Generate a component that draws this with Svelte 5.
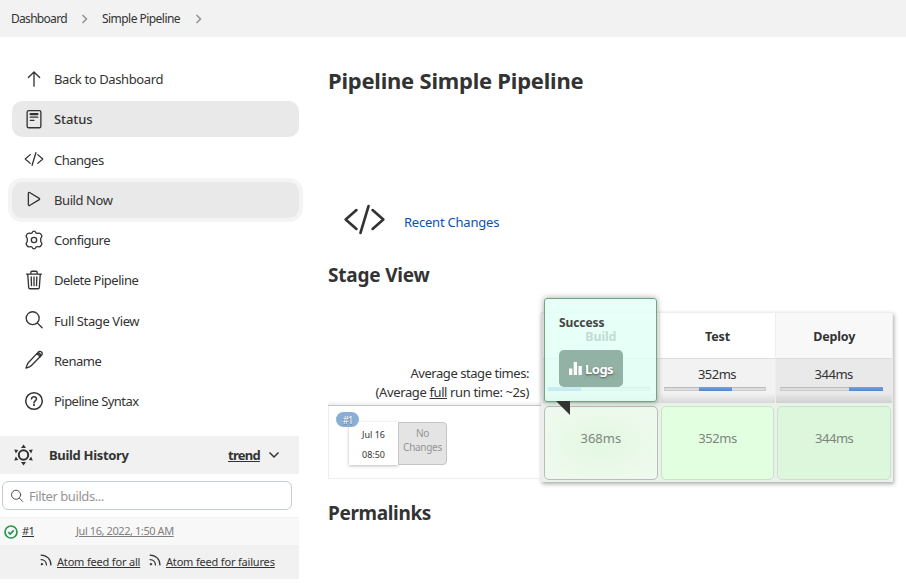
<script>
  const items = [
    { icon: 'up', label: 'Back to Dashboard', ls: -0.38 },
    { icon: 'doc', label: 'Status', active: true, ls: -0.1 },
    { icon: 'code', label: 'Changes', ls: -0.5 },
    { icon: 'play', label: 'Build Now', focus: true, ls: -0.42 },
    { icon: 'gear', label: 'Configure', ls: -0.48 },
    { icon: 'trash', label: 'Delete Pipeline', ls: -0.48 },
    { icon: 'search', label: 'Full Stage View', ls: -0.4 },
    { icon: 'pencil', label: 'Rename', ls: -0.5 },
    { icon: 'help', label: 'Pipeline Syntax', ls: -0.54 }
  ];
  const stages = [
    { name: 'Build', time: '368ms', start: 0 },
    { name: 'Test', time: '352ms', start: 34 },
    { name: 'Deploy', time: '344ms', start: 67.6 }
  ];
</script>

{#snippet icon(name)}
  <svg class="ic" viewBox="0 0 512 512" fill="none" stroke="currentColor" stroke-width="34" stroke-linecap="round" stroke-linejoin="round">
    {#if name === 'up'}
      <path d="M112 220 256 76l144 144M256 90v350" />
    {:else if name === 'doc'}
      <rect x="80" y="40" width="352" height="440" rx="40" />
      <path d="M160 120h192v20H160zM160 210h192M160 290h96" />
    {:else if name === 'code'}
      <path d="M160 368 32 256l128-112M352 368l128-112-128-112M304 96l-96 320" />
    {:else if name === 'play'}
      <path d="M112 111v290c0 17.400 17 28.500 31 20.200l247.900-148.400c12.100-7.200 12.100-26.400 0-33.600L143 90.800c-14-8.300-31 2.800-31 20.200z" />
    {:else if name === 'gear'}
      <circle cx="256" cy="256" r="68" />
      <path d="M256 28c34 0 42 24 51 48 18 7 32 18 65 6 42-8 70 26 84 64 8 32-8 46-26 66-3 24-3 62 0 88 18 20 34 34 26 66-14 38-42 72-84 64-33-12-47-1-65 6-9 24-17 48-51 48s-42-24-51-48c-18-7-32-18-65-6-42 8-70-26-84-64-8-32 8-46 26-66 3-26 3-64 0-88-18-20-34-34-26-66 14-38 42-72 84-64 33 12 47 1 65-6 9-24 17-48 51-48z" />
    {:else if name === 'trash'}
      <path d="m96 112 24 336c1 20 14 32 32 32h208c18 0 31-12 32-32l24-336M64 104h384M176 96V60c0-16 10-28 28-28h104c18 0 28 12 28 28v36M256 176v224M184 176l8 224M328 176l-8 224" />
    {:else if name === 'search'}
      <circle cx="222" cy="210" r="166" />
      <path d="m344 336 120 120" />
    {:else if name === 'pencil'}
      <path d="M358 62c28-34 66-34 90-10 24 26 24 60-6 88L184 402c-28 28-66 40-134 62 16-60 30-104 60-136zM318 104c44 2 84 42 88 84M350 72c44 4 78 36 84 78" />
    {:else if name === 'help'}
      <circle cx="256" cy="256" r="212" stroke-width="38" />
      <path d="M192 202c6-40 34-54 66-54 36 0 64 22 62 58-2 44-64 48-64 92v12" stroke-width="38" />
      <circle cx="256" cy="360" r="12" />
    {:else if name === 'feed'}
      <circle cx="104" cy="408" r="28" fill="currentColor" />
      <path d="M76 240c116 0 196 84 196 196M76 76c208 0 360 152 360 360" stroke-width="46" />
    {/if}
  </svg>
{/snippet}

{#snippet chevron()}
  <svg class="chev" viewBox="0 0 8 12" fill="none" stroke="#919191" stroke-width="1.500"><path d="m1.500 2 4 4-4 4" /></svg>
{/snippet}

<div class="page">
  <header>
    <span class="c1">Dashboard</span>{@render chevron()}<span class="c2">Simple Pipeline</span>{@render chevron()}
  </header>
  <div class="body">
    <aside>
      <nav>
        {#each items as it}
          <div class="item" class:active={it.active} class:focus={it.focus}>
            {@render icon(it.icon)}<span style="letter-spacing:{it.ls}px">{it.label}</span>
          </div>
        {/each}
      </nav>
      <section class="history">
        <div class="hhead">
          <svg class="sun" viewBox="0 0 20 22"><circle cx="10" cy="11" r="4.700" fill="none" stroke="#333" stroke-width="2" /><path fill="#333" d="m10 .5 2.500 3.500h-5zM10 21.500l2.500-3.500h-5zM.7 5.500l4 .4-2.300 3.500zM19.300 5.500l-4 .4 2.300 3.500zM.7 16.500l4-.4-2.300-3.500zM19.300 16.500l-4-.4 2.300-3.500z" /></svg>
          <b class="title">Build History</b>
          <b class="trend">trend</b>
          <svg class="down" viewBox="0 0 12 8" fill="none" stroke="#333" stroke-width="1.500"><path d="m1.500 1.500 4.500 4.500 4.500-4.500" /></svg>
        </div>
        <div class="filterwrap"><div class="filter">{@render icon('search')}<span>Filter builds...</span></div></div>
        <div class="build">
          <svg viewBox="0 0 14 14" fill="none" stroke="#23994b" stroke-width="1.700"><circle cx="7" cy="7" r="6" /><path d="m4.300 7.200 1.900 1.900 3.500-3.800" /></svg>
          <span class="num"><span>#1</span></span><span class="date">Jul 16, 2022, 1:50 AM</span>
        </div>
        <div class="feeds">
          {@render icon('feed')}<span class="f1">Atom feed for all</span>{@render icon('feed')}<span class="f2">Atom feed for failures</span>
        </div>
      </section>
    </aside>
    <main>
      <h1>Pipeline Simple Pipeline</h1>
      <div class="recent">{@render icon('code')}<span>Recent Changes</span></div>
      <h2>Stage View</h2>
      <div class="view">
        <div class="runs">
          <div class="avg"><div class="a1">Average stage times:</div><div class="a2">(Average <u>full</u> run time: ~2s)</div></div>
          <div class="run">
            <span class="badge">#1</span>
            <div class="when"><span>Jul 16</span><span>08:50</span></div>
            <div class="nochg">No<br />Changes</div>
          </div>
        </div>
        <div class="stages">
          {#each stages as s, i}
            <div class="stage s{i}">
              <div class="name">{s.name}</div>
              <div class="time"><span>{s.time}</span><div class="bar"><i style="margin-left:{s.start}%"></i></div></div>
              <div class="cellwrap"><div class="cell">{s.time}</div></div>
            </div>
          {/each}
        </div>
        <div class="tip">
          <b>Success</b>
          <div class="logs"><svg viewBox="0 0 13 13" fill="#fff"><path d="M0 6.500h3.300V13H0zM4.700 0H8v13H4.700zM9.500 4h3.300v9H9.500z" /></svg>Logs</div>
          <svg class="arrow" viewBox="0 0 14 14"><path d="M0 0h14v14z" fill="#333" /></svg>
        </div>
      </div>
      <h2 class="perma">Permalinks</h2>
    </main>
  </div>
</div>

<style>
  .page { width: 906px; height: 583px; overflow: hidden; background: #fff; color: #333; font: 13px 'Noto Sans', sans-serif; }
  .page * { box-sizing: border-box; }
  span, b, h1, h2, .name, .a1, .a2, .cell { white-space: nowrap; }
  header { height: 37px; background: #f2f2f2; display: flex; align-items: center; padding-left: 11px; font-size: 12px; }
  .c1 { width: 56px; letter-spacing: -.7px; }
  .c2 { width: 79px; letter-spacing: -.54px; }
  .chev { width: 8px; height: 12px; margin: 0 13px 0 14px; }
  .body { display: flex; height: 546px; }
  .ic { width: 20px; height: 20px; flex: none; }
  aside { width: 299px; padding-top: 24px; flex: none; }
  nav { padding-left: 12px; display: flex; flex-direction: column; gap: 4.250px; height: 375px; }
  .item { height: 36px; flex: none; border-radius: 10px; display: flex; align-items: center; padding-left: 12px; gap: 10px; }
  .item .ic { margin-top: -1px; }
  .active, .focus { background: #e9e9e9; }
  .active .ic { margin-top: 0; }
  .active { font-weight: 500; }
  .focus { box-shadow: 0 0 0 4px #f4f4f4; }
  .hhead { height: 38px; background: #f1f1f1; display: flex; align-items: center; padding: 0 0 1px 13px; }
  .sun { width: 21px; height: 22px; }
  .title { margin-left: 15px; width: 179px; letter-spacing: -.32px; }
  .trend { width: 32px; text-decoration: underline; letter-spacing: -.75px; }
  .down { width: 12px; height: 8px; margin-left: 8px; }
  .filterwrap { height: 43px; padding: 7px 7px 0 2px; }
  .filter { height: 29px; border: 1px solid #c3ccd1; border-radius: 6px; display: flex; align-items: center; padding-left: 7px; gap: 5px; color: #949494; letter-spacing: -.42px; }
  .filter .ic { width: 14px; height: 14px; color: #444; }
  .build { height: 28px; background: #f8f8f8; border-top: 1px solid #f3f3f3; display: flex; align-items: center; padding: 0 0 2px 4px; font-size: 11px; }
  .build svg { width: 14px; height: 14px; margin: 2px 4px 0 0; }
  .num { width: 54px; letter-spacing: -.7px; }
  .num span { text-decoration: underline; }
  .date { color: #808080; text-decoration: underline; letter-spacing: -.42px; }
  .feeds { height: 34px; background: #f1f1f1; display: flex; align-items: center; padding: 0 0 1px 39px; font-size: 11px; }
  .feeds .ic { width: 14px; height: 14px; margin: -3px 4px 0 0; }
  .feeds span { text-decoration: underline; letter-spacing: -.18px; }
  .f1 { margin-right: 7px; width: 84px; }
  main { padding-left: 29px; width: 607px; }
  h1, h2 { margin: 0; font-family: 'Noto Sans', sans-serif; font-weight: 700; }
  h1 { font-size: 22px; line-height: 30px; padding-top: 28px; height: 143px; letter-spacing: -.23px; }
  .recent { height: 81px; display: flex; align-items: center; padding: 2px 0 0 15px; color: #0b52b0; letter-spacing: -.22px; }
  .recent .ic { width: 43px; height: 43px; color: #333; margin: -4px 18px 0 0; stroke-width: 32; }
  h2 { font-size: 19px; line-height: 28px; height: 51px; letter-spacing: -.2px; }
  .view { height: 170px; display: flex; position: relative; width: 565px; }
  .runs { width: 213px; }
  .avg { height: 94px; padding: 52px 12px 0 0; text-align: right; line-height: 19px; border-bottom: 1px solid #c5c5c5; background: linear-gradient(#fff 89px, #eee); }
  .a1 { letter-spacing: -.45px; }
  .a2 { letter-spacing: -.38px; }
  .run { height: 73px; border: solid #ededed; border-width: 0 0 1px 1px; padding: 16px 0 0 20px; display: flex; position: relative; }
  .badge { position: absolute; left: 7px; top: 6px; width: 23px; height: 15px; border-radius: 8px; background: #8aaed5; color: #fff; font-size: 10px; line-height: 16px; text-align: center; letter-spacing: -1px; text-shadow: 0 1px 1px #567; }
  .when { width: 49px; height: 43px; box-shadow: 0 1px 3px #bbb; font-size: 9px; display: flex; flex-direction: column; align-items: center; line-height: 20px; padding-top: 3px; background: #fff; }
  .nochg { width: 49px; height: 43px; border: 1px solid #c4c4c4; border-radius: 0 4px 4px 0; background: #e4e4e4; color: #949494; text-align: center; font-size: 10px; line-height: 14px; padding-top: 3px; letter-spacing: -.3px; }
  .stages { width: 352px; display: flex; box-shadow: 1px 2px 4px #aaa; background: #eee; gap: 1px; padding: 1px 1px 1px 2px; }
  .stage { flex: 1; display: flex; flex-direction: column; text-align: center; }
  .name { height: 45px; background: #fff; line-height: 47px; font-weight: 700; font-size: 12.500px; letter-spacing: -.15px; }
  .time { height: 45px; border-top: 1px solid #ddd; background: linear-gradient(#f2f2f2 78%, #d8d8d8); padding: 6px 9px 0 4px; line-height: 18px; }
  .time span { padding-left: 4px; letter-spacing: -.5px; }
  .s2 .name { background: #f8f8f8; }
  .s2 .time { background: linear-gradient(#e9e9e9 78%, #d0d0d0); }
  .bar { height: 4px; margin-top: 4px; background: #ddd; border: 1px solid #ccc; border-top-color: #bbb; }
  .bar i { display: block; width: 33%; height: 4px; margin-top: -1px; background: linear-gradient(#78a3db, #5486cd); }
  .cellwrap { flex: 1; padding: 3px 1px 1px; background: #e6f3e6; }
  .cell { height: 74px; border: 1px solid #cfdfcf; border-radius: 5px; background: #e2ffe0; color: #7f857f; line-height: 63px; letter-spacing: -.45px; }
  .s2 .cell { background: #dcf7dc; }
  .s0 .cell { background: radial-gradient(#e3f8e2, #f0faef); border-color: #b9bdb9; letter-spacing: 0; }
  .tip { position: absolute; left: 216px; top: -14px; width: 113px; height: 104px; border: 1px solid #72a482; border-radius: 3px; background: rgba(224, 255, 245, .82); box-shadow: 0 0 6px rgba(0, 0, 0, .35); padding: 15px 0 0 14px; }
  .tip b { display: block; font-size: 12px; line-height: 18px; color: #444; letter-spacing: -.1px; }
  .logs { width: 64px; height: 37px; margin-top: 18px; border-radius: 5px; background: rgba(128, 162, 147, .83); color: #fff; font-weight: 700; display: flex; align-items: center; padding-left: 10px; gap: 3px; text-shadow: 0 1px 2px #555; letter-spacing: -.5px; }
  .logs svg { width: 13px; height: 13px; flex: none; }
  .arrow { position: absolute; left: 11px; top: 102px; width: 14px; height: 14px; }
  .perma { padding-top: 17px; letter-spacing: -.35px; }
</style>
